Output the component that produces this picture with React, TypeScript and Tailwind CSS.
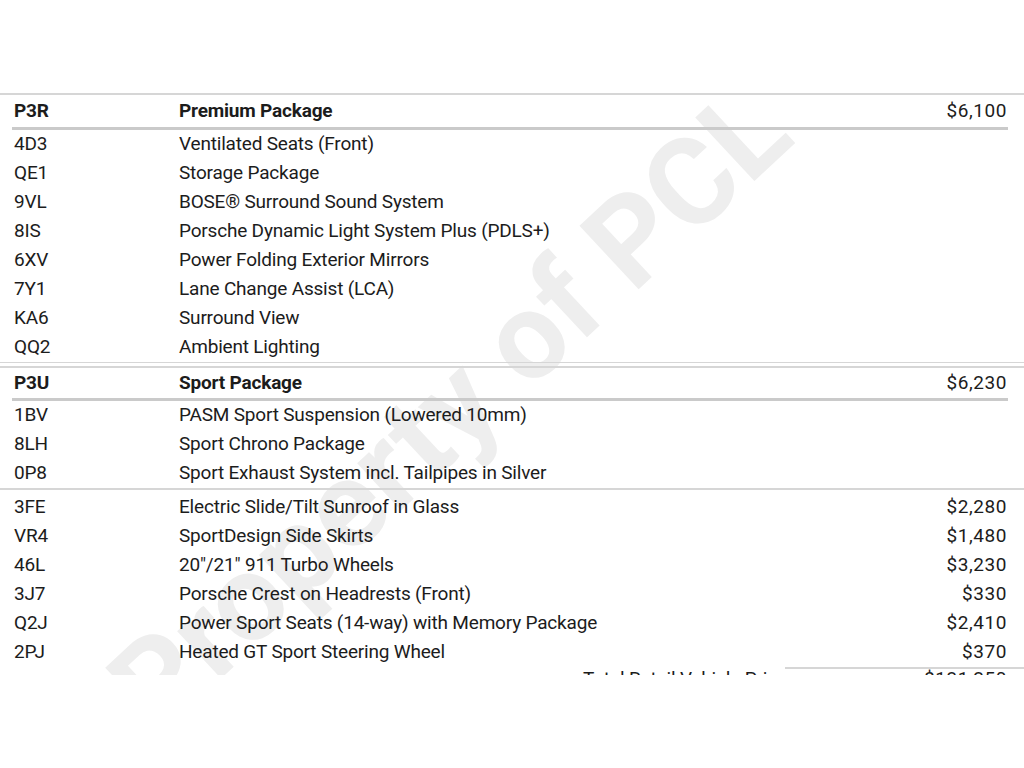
const premium = [
  ['4D3', 'Ventilated Seats (Front)'],
  ['QE1', 'Storage Package'],
  ['9VL', 'BOSE® Surround Sound System'],
  ['8IS', 'Porsche Dynamic Light System Plus (PDLS+)'],
  ['6XV', 'Power Folding Exterior Mirrors'],
  ['7Y1', 'Lane Change Assist (LCA)'],
  ['KA6', 'Surround View'],
  ['QQ2', 'Ambient Lighting'],
]

const sport = [
  ['1BV', 'PASM Sport Suspension (Lowered 10mm)'],
  ['8LH', 'Sport Chrono Package'],
  ['0P8', 'Sport Exhaust System incl. Tailpipes in Silver'],
]

const options = [
  ['3FE', 'Electric Slide/Tilt Sunroof in Glass', '$2,280'],
  ['VR4', 'SportDesign Side Skirts', '$1,480'],
  ['46L', '20"/21" 911 Turbo Wheels', '$3,230'],
  ['3J7', 'Porsche Crest on Headrests (Front)', '$330'],
  ['Q2J', 'Power Sport Seats (14-way) with Memory Package', '$2,410'],
  ['2PJ', 'Heated GT Sport Steering Wheel', '$370'],
]

function Row({ code, label, price }: { code: string; label: string; price?: string }) {
  return (
    <div className="flex h-[29px] items-center">
      <div className="w-[179px] pl-[14px]">{code}</div>
      <div className="flex-1">{label}</div>
      <div className="pr-[17px] text-right tracking-[0.03em]">{price}</div>
    </div>
  )
}

function Header({ code, label, price, tall }: { code: string; label: string; price: string; tall?: boolean }) {
  return (
    <div>
      <div className={tall ? 'flex h-[32px] items-center pt-[1px] font-bold' : 'flex h-[30px] items-center font-bold'}>
        <div className="w-[179px] pl-[14px]">{code}</div>
        <div className="flex-1">{label}</div>
        <div className="pr-[17px] text-right font-normal tracking-[0.03em]">{price}</div>
      </div>
      <div className="mx-[12px] h-[3px] w-[996px] bg-[#cacaca]" />
    </div>
  )
}

export default function App() {
  return (
    <div className="h-[768px] w-[1024px] bg-white">
      <div className="relative h-[675px] overflow-hidden font-['Roboto',sans-serif] text-[19px] tracking-[-0.01em] text-[#1c1c1c]">
        {/* watermark */}
        <div className="pointer-events-none absolute left-[-50px] top-[348px] w-[1000px] -rotate-[43deg] text-center text-[122px] font-bold leading-none tracking-normal text-[#eeeeee] select-none">
          Property of PCL
        </div>

        <div className="relative pt-[93px]">
          <div className="h-[2px] bg-[#d6d6d6]" />
          <Header code="P3R" label="Premium Package" price="$6,100" tall />
          {premium.map(([c, l]) => (
            <Row key={c} code={c} label={l} />
          ))}
          <div className="h-[1px] bg-[#d6d6d6]" />
          <div className="h-[3px]" />
          <div className="h-[2px] bg-[#d6d6d6]" />
          <Header code="P3U" label="Sport Package" price="$6,230" />
          {sport.map(([c, l]) => (
            <Row key={c} code={c} label={l} />
          ))}
          <div className="h-[2px] bg-[#d6d6d6]" />
          <div className="h-[3px]" />
          {options.map(([c, l, p]) => (
            <Row key={c} code={c} label={l} price={p} />
          ))}
          <div className="ml-[785px] h-[2px] bg-[#d6d6d6]" />
          <div className="flex h-[20px] items-center">
            <div className="w-[583px]" />
            <div className="flex-1">Total Retail Vehicle Price</div>
            <div className="pr-[17px] text-right tracking-[0.03em]">$131,250</div>
          </div>
        </div>
      </div>
    </div>
  )
}
